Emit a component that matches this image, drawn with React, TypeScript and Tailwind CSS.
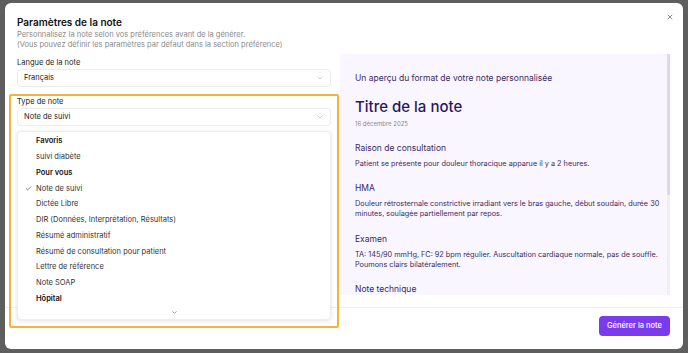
import React from 'react';
import { ChevronDown, Check, X } from 'lucide-react';

const items: { label: string; group?: boolean; selected?: boolean }[] = [
  { label: 'Favoris', group: true },
  { label: 'suivi diabète' },
  { label: 'Pour vous', group: true },
  { label: 'Note de suivi', selected: true },
  { label: 'Dictée Libre' },
  { label: 'DIR (Données, Interprétation, Résultats)' },
  { label: 'Résumé administratif' },
  { label: 'Résumé de consultation pour patient' },
  { label: 'Lettre de référence' },
  { label: 'Note SOAP' },
  { label: 'Hôpital', group: true },
];

const sections = [
  { title: 'Raison de consultation', body: 'Patient se présente pour douleur thoracique apparue il y a 2 heures.' },
  { title: 'HMA', body: 'Douleur rétrosternale constrictive irradiant vers le bras gauche, début soudain, durée 30 minutes, soulagée partiellement par repos.' },
  { title: 'Examen', body: 'TA: 145/90 mmHg, FC: 92 bpm régulier. Auscultation cardiaque normale, pas de souffle. Poumons clairs bilatéralement.' },
  { title: 'Note technique', body: '' },
];

const SelectBox = ({ value }: { value: string }) => (
  <div className="flex h-[18px] items-center justify-between rounded-[4px] border border-[#ececec] bg-white pl-[6px] pr-[6px] text-[7.5px] text-[#222]">
    <span>{value}</span>
    <ChevronDown className="h-[8px] w-[8px] text-[#999]" strokeWidth={1.5} />
  </div>
);

export default function App() {
  return (
    <div
      className="h-[353px] w-[688px] overflow-hidden bg-[#5e5e5e] pl-[5px] pt-[3px]"
      style={{ fontFamily: 'Inter, "Noto Sans", sans-serif' }}
    >
      <div className="relative flex h-[346px] w-[678px] flex-col rounded-[6px] bg-white">
        <X className="absolute right-[9px] top-[10px] h-[8px] w-[8px] text-[#555]" strokeWidth={2} />

        <div className="px-[12px] pt-[12px]">
          <h1 className="text-[10px] font-semibold leading-[14px] text-[#111]">Paramètres de la note</h1>
          <p className="mt-[1px] text-[7.5px] leading-[10px] text-[#8a8a8a]">
            Personnalisez la note selon vos préférences avant de la générer.
            <br />
            (Vous pouvez définir les paramètres par défaut dans la section préférence)
          </p>
        </div>

        <div className="flex gap-[9px] pl-[12px] pr-[13px] pt-[4px]">
          <div className="w-[314px] shrink-0 pt-[4px]">
            <div className="text-[7.5px] leading-[10px] text-[#222]">Langue de la note</div>
            <div className="mt-[1px]">
              <SelectBox value="Français" />
            </div>

            <div className="relative mt-[10px]">
              <div className="absolute left-[-8px] top-[-3px] h-[234px] w-[330px] rounded-[2px] border-2 border-[#f3b33d]" />
              <div className="text-[7.5px] leading-[10px] text-[#222]">Type de note</div>
              <div className="mt-[1px]">
                <SelectBox value="Note de suivi" />
              </div>
              <div className="absolute left-0 top-[34px] z-10 w-[314px] rounded-[4px] border border-[#eeeeee] bg-white pt-[1px] shadow-[0_1px_4px_rgba(0,0,0,0.12)]">
                {items.map((it) => (
                  <div
                    key={it.label}
                    className={`relative flex h-[15.75px] items-center pl-[18px] text-[7.5px] ${
                      it.group ? 'font-semibold text-[#111]' : 'text-[#333]'
                    }`}
                  >
                    {it.selected && (
                      <Check className="absolute left-[7px] h-[7px] w-[7px] text-[#333]" strokeWidth={2} />
                    )}
                    {it.label}
                  </div>
                ))}
                <div className="flex h-[13px] items-center justify-center">
                  <ChevronDown className="h-[7px] w-[7px] text-[#555]" strokeWidth={2} />
                </div>
              </div>
            </div>
          </div>

          <div className="relative h-[241px] flex-1 overflow-hidden bg-[#faf6ff] pl-[15px] pr-[4px] pt-[19px] text-[#3a2a5e]">
            <div className="absolute right-0 top-0 h-full w-[3px] bg-[#f1eefb]">
              <div className="h-[141px] w-full bg-[#dcd8f2]" />
            </div>
            <div className="text-[8.5px] leading-[11px]">Un aperçu du format de votre note personnalisée</div>
            <div className="mt-[13px] text-[15px] font-medium leading-[20px] text-[#2a1660]">Titre de la note</div>
            <div className="mt-[3px] text-[6px] leading-[8px] text-[#8a8a8a]">16 décembre 2025</div>
            {sections.map((s) => (
              <div key={s.title} className="mt-[14.5px]">
                <div className="text-[8.5px] leading-[11px]">{s.title}</div>
                {s.body && <p className="mt-[5px] text-[7.3px] leading-[10px]">{s.body}</p>}
              </div>
            ))}
          </div>
        </div>

        <div className="mt-auto flex justify-end border-t border-[#efefef] pb-[13px] pr-[13px] pt-[8px]">
          <button className="h-[20px] rounded-[4px] bg-[#7c3aed] px-[8px] text-[7.5px] font-medium text-white">
            Générer la note
          </button>
        </div>
      </div>
    </div>
  );
}
